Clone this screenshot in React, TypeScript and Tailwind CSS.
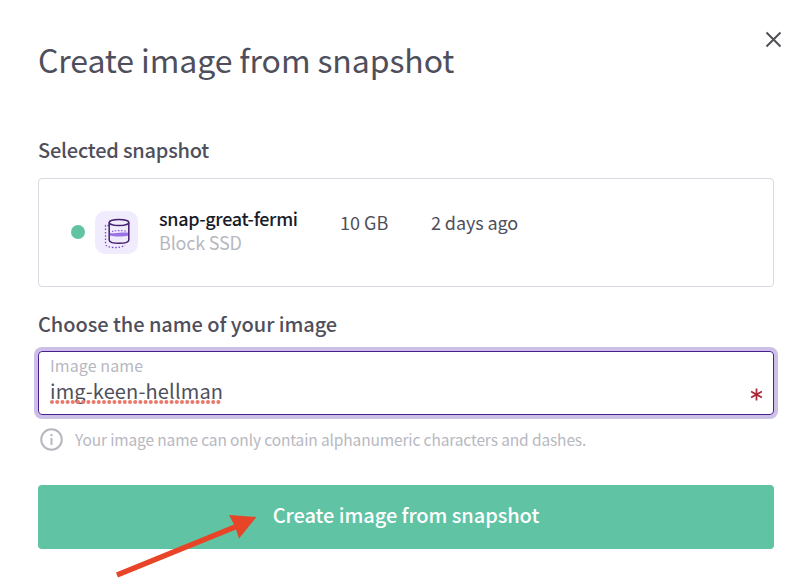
function SnapshotIcon() {
  return (
    <svg width="43" height="43" viewBox="0 0 43 43" fill="none">
      <rect width="43" height="43" rx="10" fill="#f1ecfd" />
      <path d="M14 14.500h-3.500v18.500c0 4 15 5 19.500 1" stroke="#7c48d0" strokeWidth="1.3" strokeDasharray="1.5 1.8" />
      <path d="M15 21.900c5 1 14-1 18.500 0v2.600c-5 1.400-14 1.400-18.500 0z" fill="#9a72e6" />
      <path d="M17 20.500c4-1.200 11-1.200 15 0" stroke="#8a5bd6" strokeWidth="1.2" strokeDasharray="1.5 1.5" />
      <ellipse cx="24" cy="11.500" rx="9.800" ry="3" stroke="#43206f" strokeWidth="1.5" />
      <path d="M14.200 11.500v17.500c0 4.400 19.600 4.400 19.600 0V11.500" stroke="#43206f" strokeWidth="1.5" />
    </svg>
  );
}

export default function App() {
  return (
    <div className="relative h-[586px] w-[812px] overflow-hidden bg-white px-[38px] font-['Noto_Sans_CJK_SC',sans-serif] text-[#4f4f5c]">
      <header className="flex h-[130px] justify-between">
        <h1 className="pt-[39px] text-[32px] leading-[40px] tracking-[-0.1px] whitespace-nowrap">Create image from snapshot</h1>
        <button aria-label="Close" className="-mr-2 mt-[31px] h-[17px] w-[17px]">
          <svg width="17" height="17" viewBox="0 0 17 17" stroke="#505058" strokeWidth="2"><path d="M1.500 1.500l14 14M15.500 1.500l-14 14" /></svg>
        </button>
      </header>
      <h2 className="h-[48px] pt-[5px] text-[20px] leading-[30px] font-medium tracking-[-0.22px] whitespace-nowrap">Selected snapshot</h2>
      <section className="flex h-[109px] rounded border border-[#d9dae2] pl-8">
        <span className="mt-[46px] h-[14px] w-[14px] rounded-full bg-[#60c3a4]" />
        <div className="mt-8 ml-[10px]"><SnapshotIcon /></div>
        <div className="mt-[27px] ml-[21px] w-[181px]">
          <p className="text-[18px] leading-6 font-medium tracking-[-0.36px] whitespace-nowrap text-[#191c28]">snap-great-fermi</p>
          <p className="text-[18px] leading-6 tracking-[-0.2px] whitespace-nowrap text-[#b7b8bf]">Block SSD</p>
        </div>
        <p className="mt-[31px] w-[91px] text-[18px] leading-6 whitespace-nowrap">10 GB</p>
        <p className="mt-[31px] text-[18px] leading-6 tracking-[-0.1px] whitespace-nowrap">2 days ago</p>
      </section>
      <h2 className="h-[64px] pt-[22px] text-[20px] leading-[30px] font-medium tracking-[-0.05px] whitespace-nowrap">Choose the name of your image</h2>
      <div className="flex h-[64px] justify-between rounded border border-[#4b1e91] pr-[10px] pl-[11px] ring-4 ring-[#cdc0e6]">
        <div>
          <p className="mt-px text-[16px] leading-6 tracking-[0.1px] whitespace-nowrap text-[#b7b8bf]">Image name</p>
          <p className="mt-px text-[20px] leading-[26px] tracking-[0.15px] whitespace-nowrap">img-keen-hellman</p>
          <svg className="-mt-[4px] block" width="172" height="4"><path d="M2 2H172" stroke="#e8796b" strokeWidth="4" strokeLinecap="round" strokeDasharray="0 5.200" /></svg>
        </div>
        <svg className="mt-[36px]" width="13" height="13" viewBox="0 0 12 12" stroke="#aa2637" strokeWidth="1.6"><path d="M6 .5v11M1 3.200l10 5.600M11 3.200L1 8.800" /></svg>
      </div>
      <div className="flex h-[70px] pt-[13px] pl-[2px] text-[#b7b8bf]">
        <svg width="23" height="23" viewBox="0 0 23 23" fill="none" stroke="currentColor" strokeWidth="2"><circle cx="11.500" cy="11.500" r="10.300" /><path d="M11.500 10v7M11.500 6v2.200" /></svg>
        <p className="-mt-px ml-[12px] text-[15.5px] leading-6 tracking-[-0.13px] whitespace-nowrap">Your image name can only contain alphanumeric characters and dashes.</p>
      </div>
      <button className="flex h-[64px] w-full justify-center rounded bg-[#60c3a4] pt-[15px] text-[20px] leading-[30px] font-medium tracking-[-0.06px] whitespace-nowrap text-white">Create image from snapshot</button>
      <svg className="pointer-events-none absolute top-[505px] left-[110px]" width="155" height="81" viewBox="110 505 155 81" fill="#e84427">
        <path d="M116 572.500L234 524.500L229 515L256.500 517L239 538.500L236 529.500L118 577.500Z" />
      </svg>
    </div>
  );
}
